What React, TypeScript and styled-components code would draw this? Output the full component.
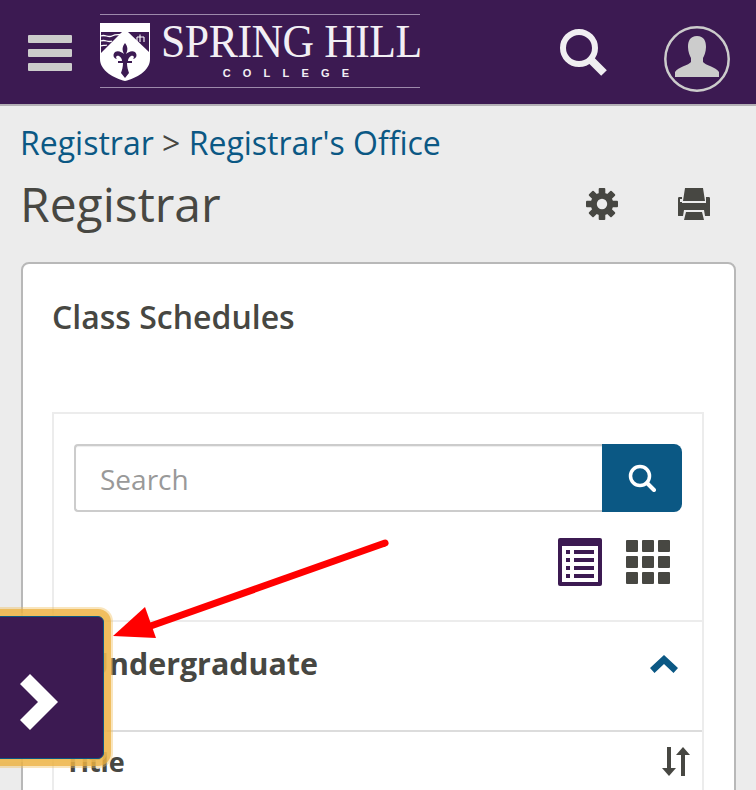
import React from "react";
import styled, { createGlobalStyle } from "styled-components";

const Global = createGlobalStyle`
  html, body { margin: 0; padding: 0; background: #ececec; overflow: hidden; }
  body { font-family: "Open Sans", "Noto Sans", sans-serif; }
`;

const Page = styled.div`
  position: relative;
  width: 756px;
  height: 790px;
  overflow: hidden;
  background: #ececec;
`;

const Header = styled.header`
  height: 104px;
  box-sizing: content-box;
  background: #3c1a52;
  border-bottom: 2px solid #b3b0b5;
  display: flex;
  align-items: center;
  padding-left: 28px;
`;

const Burger = styled.div`
  display: flex;
  flex-direction: column;
  gap: 6px;
  width: 44px;
  margin-right: 28px;
  margin-top: 1px;
`;

const BurgerBar = styled.span`
  display: block;
  height: 8px;
  border-radius: 1px;
  background: #cccccc;
`;

const Logo = styled.div`
  width: 320px;
  height: 74px;
  margin-top: -3px;
  box-sizing: border-box;
  border-top: 1px solid #9d8aab;
  border-bottom: 1px solid #9d8aab;
  display: flex;
  align-items: flex-start;
  padding-top: 8px;
  gap: 11px;
`;

const Crest = styled.svg`
  width: 50px;
  height: 58px;
  flex: none;
`;

const LogoWords = styled.div`
  width: 258px;
  display: flex;
  flex-direction: column;
  align-items: center;
`;

const LogoName = styled.div`
  align-self: flex-start;
  font-family: "Liberation Serif", serif;
  font-size: 47px;
  line-height: 36px;
  color: #f2eff4;
  white-space: nowrap;
  letter-spacing: -0.5px;
  transform: scaleX(0.93);
  transform-origin: left center;
`;

const LogoSub = styled.div`
  font-family: "Liberation Sans", sans-serif;
  font-size: 11px;
  line-height: 12px;
  margin-top: 8px;
  padding-left: 4px;
  color: #f2eff4;
  letter-spacing: 12.2px;
  font-weight: 700;
`;

const HeaderIcons = styled.div`
  margin-left: auto;
  display: flex;
  align-items: center;
  gap: 55px;
  padding-right: 26px;
`;

const AvatarSlot = styled.div`
  display: flex;
  margin-top: 14px;
`;

const SearchSlot = styled.div`
  display: flex;
  margin-top: 2px;
`;

const Content = styled.main`
  padding: 18px 20px 0 20px;
`;

const Crumbs = styled.div`
  font-size: 32px;
  line-height: 38px;
  color: #474742;
  white-space: nowrap;
`;

const Crumb = styled.a`
  color: #0b5884;
`;

const TitleRow = styled.div`
  display: flex;
  align-items: center;
  justify-content: space-between;
  margin-top: 12px;
  height: 60px;
`;

const PageTitle = styled.h1`
  margin: 0;
  font-size: 48px;
  font-weight: 400;
  line-height: 60px;
  color: #474742;
`;

const Tools = styled.div`
  display: flex;
  align-items: center;
  gap: 60px;
  padding-right: 26px;
`;

const Card = styled.section`
  margin-top: 28px;
  margin-left: 1px;
  height: 600px;
  box-sizing: border-box;
  background: #ffffff;
  border: 2px solid #b8b8b8;
  border-radius: 8px;
  padding: 31px 30px 0;
`;

const CardTitle = styled.h2`
  margin: 0;
  font-size: 32px;
  line-height: 44px;
  font-weight: 600;
  color: #474742;
  margin-left: -1px;
`;

const Inner = styled.div`
  margin-top: 73px;
  margin-left: -1px;
  border: 2px solid #ececec;
  height: 500px;
`;

const SearchRow = styled.div`
  display: flex;
  margin: 30px 20px 0;
  height: 68px;
`;

const SearchInput = styled.div`
  flex: 1;
  box-sizing: border-box;
  border: 2px solid #cccccc;
  border-right: none;
  border-radius: 4px 0 0 4px;
  box-shadow: inset 0 1px 1px rgba(0, 0, 0, 0.075);
  padding: 2px 0 0 24px;
  font-size: 28px;
  color: #999999;
  display: flex;
  align-items: center;
`;

const SearchButton = styled.div`
  width: 80px;
  background: #0b5884;
  border-radius: 0 8px 8px 0;
  display: flex;
  align-items: center;
  justify-content: center;
`;

const Views = styled.div`
  display: flex;
  justify-content: flex-end;
  align-items: center;
  gap: 24px;
  margin: 26px 32px 0 0;
  height: 48px;
`;

const Section = styled.div`
  margin-top: 34px;
  border-top: 2px solid #ececec;
  height: 110px;
  box-sizing: border-box;
  display: flex;
  align-items: center;
  justify-content: space-between;
  padding: 0 24px 24px 32px;
`;

const SectionTitle = styled.div`
  font-size: 30.4px;
  font-weight: 700;
  line-height: 44px;
  color: #474742;
`;

const TableHead = styled.div`
  border-top: 2px solid #dcdcdc;
  display: flex;
  align-items: center;
  justify-content: space-between;
  padding: 10px 12px 0 11px;
`;

const HeadLabel = styled.div`
  font-size: 27px;
  line-height: 40px;
  font-weight: 700;
  color: #474742;
`;

const Tab = styled.div`
  position: absolute;
  left: -8px;
  top: 616px;
  width: 112px;
  height: 143px;
  box-sizing: border-box;
  background: #3c1a52;
  border: 1px solid #0b5884;
  border-radius: 6px;
  box-shadow: 0 0 0 3px rgba(240, 190, 90, 0.5), 0 0 0 7px rgba(236, 175, 60, 0.72), 0 0 0 9px rgba(240, 190, 90, 0.4);
  display: flex;
  align-items: center;
  justify-content: center;
  padding: 28px 18px 0 0;
`;

const Arrow = styled.svg`
  position: absolute;
  left: 100px;
  top: 530px;
  width: 300px;
  height: 120px;
  pointer-events: none;
`;

export default function App() {
  return (
    <Page>
      <Global />
      <Header>
        <Burger>
          <BurgerBar />
          <BurgerBar />
          <BurgerBar />
        </Burger>
        <Logo>
          <Crest viewBox="0 0 50 58">
            <path d="M0 0H50V36C50 48 36 55 25 58C14 55 0 48 0 36Z" fill="#fff" />
            <path d="M1 9H22L1 30Z" fill="#3c1a52" />
            <path d="M1 13C5 11 8 15 12 13S18 12 21 11.500M1 18C5 16 8 20 12 18M1 23C3 21.500 5 23 7 22" stroke="#fff" strokeWidth="1.300" fill="none" />
            <path d="M28 9H49V29Z" fill="#3c1a52" />
            <path d="M40 11.500V19M44 14V19M37 14V19M37 14H44" stroke="#fff" strokeWidth="1.100" fill="none" />
            <path d="M25 20C22 24 22 27 24 31C22 29 18 27 15 29C12 32 14 36 17 36C15 34 17 32 19 33C21 34 22 36 22 38H18V40H23C23 44 22 47 21 50L25 55L29 50C28 47 27 44 27 40H32V38H28C28 36 29 34 31 33C33 32 35 34 33 36C36 36 38 32 35 29C32 27 28 29 26 31C28 27 28 24 25 20Z" fill="#3c1a52" />
          </Crest>
          <LogoWords>
            <LogoName>SPRING HILL</LogoName>
            <LogoSub>COLLEGE</LogoSub>
          </LogoWords>
        </Logo>
        <HeaderIcons>
          <SearchSlot>
            <svg width="50" height="50" viewBox="0 0 50 50">
              <circle cx="20" cy="20" r="16" fill="none" stroke="#f0eef1" strokeWidth="6" />
              <path d="M31 31L45 45" stroke="#f0eef1" strokeWidth="8" />
            </svg>
          </SearchSlot>
          <AvatarSlot>
            <svg width="66" height="66" viewBox="0 0 66 66">
              <circle cx="33" cy="33" r="31.700" fill="none" stroke="#cccccc" strokeWidth="2.500" />
              <path d="M33 10C26 10 24 15 24 21C24 26 26 30 27 32V36C25 39 14 41 11 46V51H55V46C52 41 41 39 39 36V32C40 30 42 26 42 21C42 15 40 10 33 10Z" fill="#cccccc" />
            </svg>
          </AvatarSlot>
        </HeaderIcons>
      </Header>
      <Content>
        <Crumbs>
          <Crumb>Registrar</Crumb> &gt; <Crumb>Registrar's Office</Crumb>
        </Crumbs>
        <TitleRow>
          <PageTitle>Registrar</PageTitle>
          <Tools>
            <svg width="32" height="32" viewBox="0 0 34 34">
              <g fill="#474742">
                <circle cx="17" cy="17" r="12" />
                {[0, 45, 90, 135, 180, 225, 270, 315].map((a) => (
                  <rect key={a} x="13.500" y="0" width="7" height="7" rx="1" transform={`rotate(${a} 17 17)`} />
                ))}
              </g>
              <circle cx="17" cy="17" r="5.500" fill="#ececec" />
            </svg>
            <svg width="32" height="32" viewBox="0 0 32 32">
              <path d="M7 0H25L27 13H5Z" fill="#474742" />
              <path d="M1 9H4V15H28V9H31C32 9 32 10 32 11V27C32 28 32 28 31 28H27L26 22H6L5 28H1C0 28 0 28 0 27V11C0 10 0 9 1 9Z" fill="#474742" />
              <path d="M8 24H24L26 32H6Z" fill="#474742" />
              <rect x="2" y="11" width="3" height="3" fill="#ececec" />
            </svg>
          </Tools>
        </TitleRow>
        <Card>
          <CardTitle>Class Schedules</CardTitle>
          <Inner>
            <SearchRow>
              <SearchInput>Search</SearchInput>
              <SearchButton>
                <svg width="28" height="28" viewBox="0 0 28 28">
                  <circle cx="12" cy="12" r="9.500" fill="none" stroke="#fff" strokeWidth="3.500" />
                  <path d="M19 19L26 26" stroke="#fff" strokeWidth="4" strokeLinecap="round" />
                </svg>
              </SearchButton>
            </SearchRow>
            <Views>
              <svg width="44" height="48" viewBox="0 0 44 48">
                <rect width="44" height="48" rx="2" fill="#3c1a52" />
                <rect x="4" y="8" width="36" height="36" fill="#fff" />
                {[12, 20, 28, 36].map((y) => (
                  <g key={y} fill="#3c1a52">
                    <rect x="8" y={y} width="4" height="4" />
                    <rect x="16" y={y} width="20" height="4" />
                  </g>
                ))}
              </svg>
              <svg width="44" height="44" viewBox="0 0 44 44" fill="#474742">
                {[0, 16, 32].map((y) =>
                  [0, 16, 32].map((x) => <rect key={`${x}-${y}`} x={x} y={y} width="12" height="12" rx="1" />)
                )}
              </svg>
            </Views>
            <Section>
              <SectionTitle>Undergraduate</SectionTitle>
              <svg width="28" height="18" viewBox="0 0 28 18">
                <path d="M14 0L28 13L23.500 18L14 9L4.500 18L0 13Z" fill="#0b5884" />
              </svg>
            </Section>
            <TableHead>
              <HeadLabel>Title</HeadLabel>
              <svg width="28" height="30" viewBox="0 0 28 30" fill="#474742">
                <path d="M5 0H9V21H14L7 29L0 21H5Z" />
                <path d="M21 0L28 8H23V29H19V8H14Z" />
              </svg>
            </TableHead>
          </Inner>
        </Card>
      </Content>
      <Tab>
        <svg width="38" height="56" viewBox="0 0 38 56">
          <path d="M0 10L10 0L38 28L10 56L0 46L18 28Z" fill="#ffffff" />
        </svg>
      </Tab>
      <Arrow viewBox="0 0 300 120">
        <path d="M285 13L45 98" stroke="#ff0000" strokeWidth="7" strokeLinecap="round" />
        <path d="M13 106L45 77L56 108Z" fill="#ff0000" />
      </Arrow>
    </Page>
  );
}
